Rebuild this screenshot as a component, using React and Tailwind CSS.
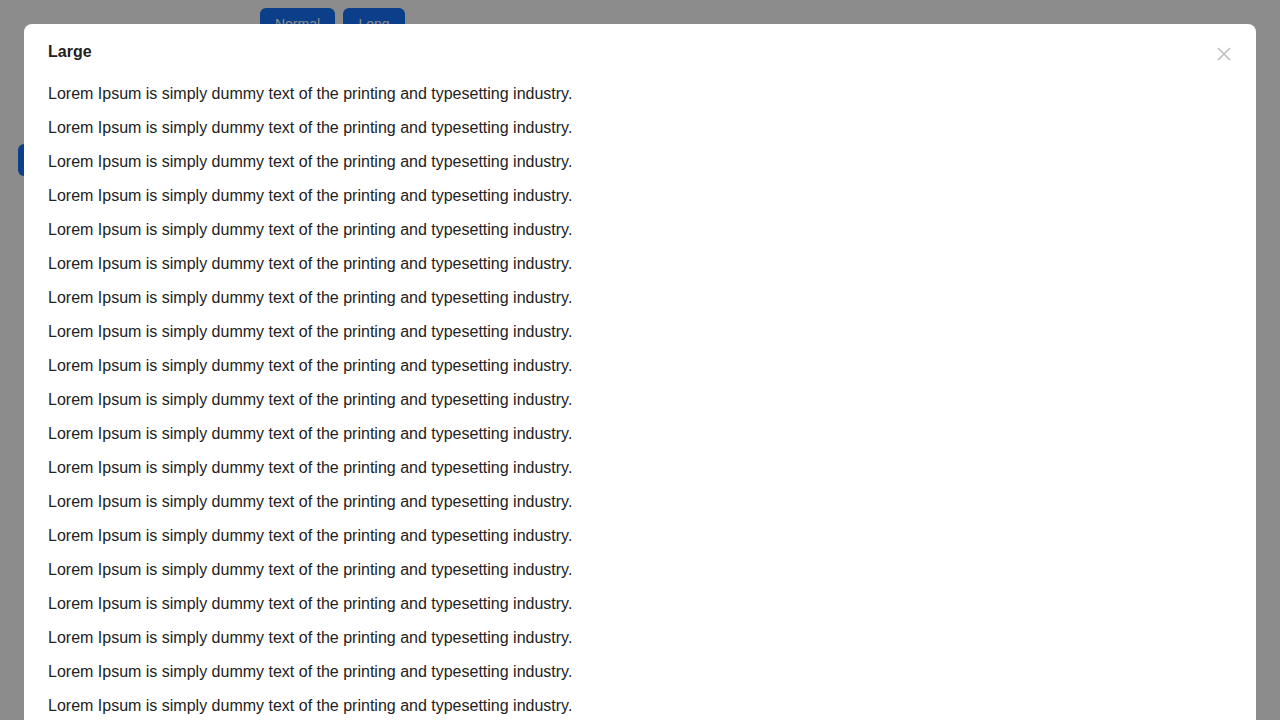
import React from "react";

export default function App() {
  const lines = Array.from({ length: 19 });
  return (
    <div className="relative h-[720px] w-[1280px] overflow-hidden bg-white" style={{ fontFamily: '"Liberation Sans", Arial, sans-serif' }}>
      <div className="flex gap-2 pl-[260px] pt-2">
        <button className="h-8 w-[75px] rounded-md bg-[#1473fb] text-sm text-white">Normal</button>
        <button className="h-8 w-[62px] rounded-md bg-[#1473fb] text-sm text-white">Long</button>
      </div>
      <div className="mt-[104px] pl-[18px]">
        <div className="h-8 w-[90px] rounded-md bg-[#1473fb]"></div>
      </div>
      <div className="fixed inset-0 bg-black/45"></div>
      <div className="absolute bottom-[-40px] left-6 right-6 top-6 rounded-lg bg-white px-6 pt-[19px]">
        <div className="flex items-start justify-between">
          <h2 className="text-base font-bold leading-[18px] text-[#222]">Large</h2>
          <button className="mr-[1px] mt-[4px] flex h-[14px] w-[14px] items-center justify-center">
            <svg width="14" height="14" viewBox="0 0 14 14" fill="none" stroke="#bdbdbd" strokeWidth="1.6">
              <path d="M1 1L13 13M13 1L1 13" />
            </svg>
          </button>
        </div>
        <div className="mt-6">
          {lines.map((_, i) => (
            <p key={i} className="mb-4 text-base leading-[18px] text-[#222]">
              Lorem Ipsum is simply dummy text of the printing and typesetting industry.
            </p>
          ))}
        </div>
      </div>
    </div>
  );
}
